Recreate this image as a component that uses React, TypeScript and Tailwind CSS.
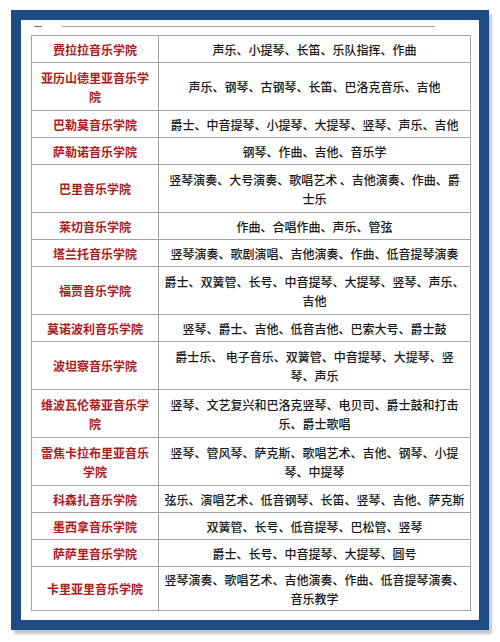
const rows: { name: string[]; majors: string[]; h: string }[] = [
  { name: ['费拉拉音乐学院'], majors: ['声乐、小提琴、长笛、乐队指挥、作曲'], h: 'h-[27px]' },
  { name: ['亚历山德里亚音乐学', '院'], majors: ['声乐、钢琴、古钢琴、长笛、巴洛克音乐、吉他'], h: 'h-[48px]' },
  { name: ['巴勒莫音乐学院'], majors: ['爵士、中音提琴、小提琴、大提琴、竖琴、声乐、吉他'], h: 'h-[27px]' },
  { name: ['萨勒诺音乐学院'], majors: ['钢琴、作曲、吉他、音乐学'], h: 'h-[27px]' },
  { name: ['巴里音乐学院'], majors: ['竖琴演奏、大号演奏、歌唱艺术 、吉他演奏、作曲、爵', '士乐'], h: 'h-[48px]' },
  { name: ['莱切音乐学院'], majors: ['作曲、合唱作曲、声乐、管弦'], h: 'h-[27px]' },
  { name: ['塔兰托音乐学院'], majors: ['竖琴演奏、歌剧演唱、吉他演奏、作曲、低音提琴演奏'], h: 'h-[27px]' },
  { name: ['福贾音乐学院'], majors: ['爵士、双簧管、长号、中音提琴、大提琴、竖琴、声乐、', '吉他'], h: 'h-[48px]' },
  { name: ['莫诺波利音乐学院'], majors: ['竖琴、爵士、吉他、低音吉他、巴索大号、爵士鼓'], h: 'h-[27px]' },
  { name: ['波坦察音乐学院'], majors: ['爵士乐、 电子音乐、双簧管、中音提琴、大提琴、竖', '琴、声乐'], h: 'h-[48px]' },
  { name: ['维波瓦伦蒂亚音乐学', '院'], majors: ['竖琴、文艺复兴和巴洛克竖琴、电贝司、爵士鼓和打击', '乐、爵士歌唱'], h: 'h-[48px]' },
  { name: ['雷焦卡拉布里亚音乐', '学院'], majors: ['竖琴、管风琴、萨克斯、歌唱艺术、吉他、钢琴、小提', '琴、中提琴'], h: 'h-[48px]' },
  { name: ['科森扎音乐学院'], majors: ['弦乐、演唱艺术、低音钢琴、长笛、竖琴、吉他、萨克斯'], h: 'h-[27px]' },
  { name: ['墨西拿音乐学院'], majors: ['双簧管、长号、低音提琴、巴松管、竖琴'], h: 'h-[27px]' },
  { name: ['萨萨里音乐学院'], majors: ['爵士、长号、中音提琴、大提琴、圆号'], h: 'h-[27px]' },
  { name: ['卡里亚里音乐学院'], majors: ['竖琴演奏、歌唱艺术、吉他演奏、作曲、低音提琴演奏、', '音乐教学'], h: 'h-[44px]' },
]

function Lines({ parts }: { parts: string[] }) {
  return (
    <>
      {parts.map((p, i) => (
        <span key={i} className="block whitespace-pre">
          {p}
        </span>
      ))}
    </>
  )
}

export default function App() {
  return (
    <div className="w-[500px] h-[642px] bg-white pt-[10px] pl-[11px] font-['Noto_Sans_CJK_SC','Noto_Sans',sans-serif]">
      {/* blue frame */}
      <div className="w-[478px] h-[620px] bg-[#1e4a86] p-[10px] shadow-[3px_4px_2px_rgba(0,0,0,0.22)]">
        <div className="w-[458px] h-[600px] bg-white pl-[10px] pt-[6px]">
          {/* scan artifact line */}
          <div className="flex items-center h-px gap-[20px]">
            <div className="ml-[3px] w-[8px] h-px bg-gray-500" />
            <div className="w-[373px] h-px bg-gray-400" />
          </div>
          <table className="mt-[8px] w-[439px] table-fixed border-collapse">
            <colgroup>
              <col className="w-[127px]" />
              <col className="w-[312px]" />
            </colgroup>
            <tbody>
              {rows.map((r, i) => (
                <tr key={i} className={r.h}>
                  <td className="border border-[#a3a3a3] px-[3px] py-0 text-center align-middle text-[12px] leading-[19px] font-bold text-[#ad1a21]">
                    <Lines parts={r.name} />
                  </td>
                  <td className="border border-[#a3a3a3] px-[3px] py-0 text-center align-middle text-[12px] leading-[19px] font-medium text-[#181818]">
                    <Lines parts={r.majors} />
                  </td>
                </tr>
              ))}
            </tbody>
          </table>
        </div>
      </div>
    </div>
  )
}
